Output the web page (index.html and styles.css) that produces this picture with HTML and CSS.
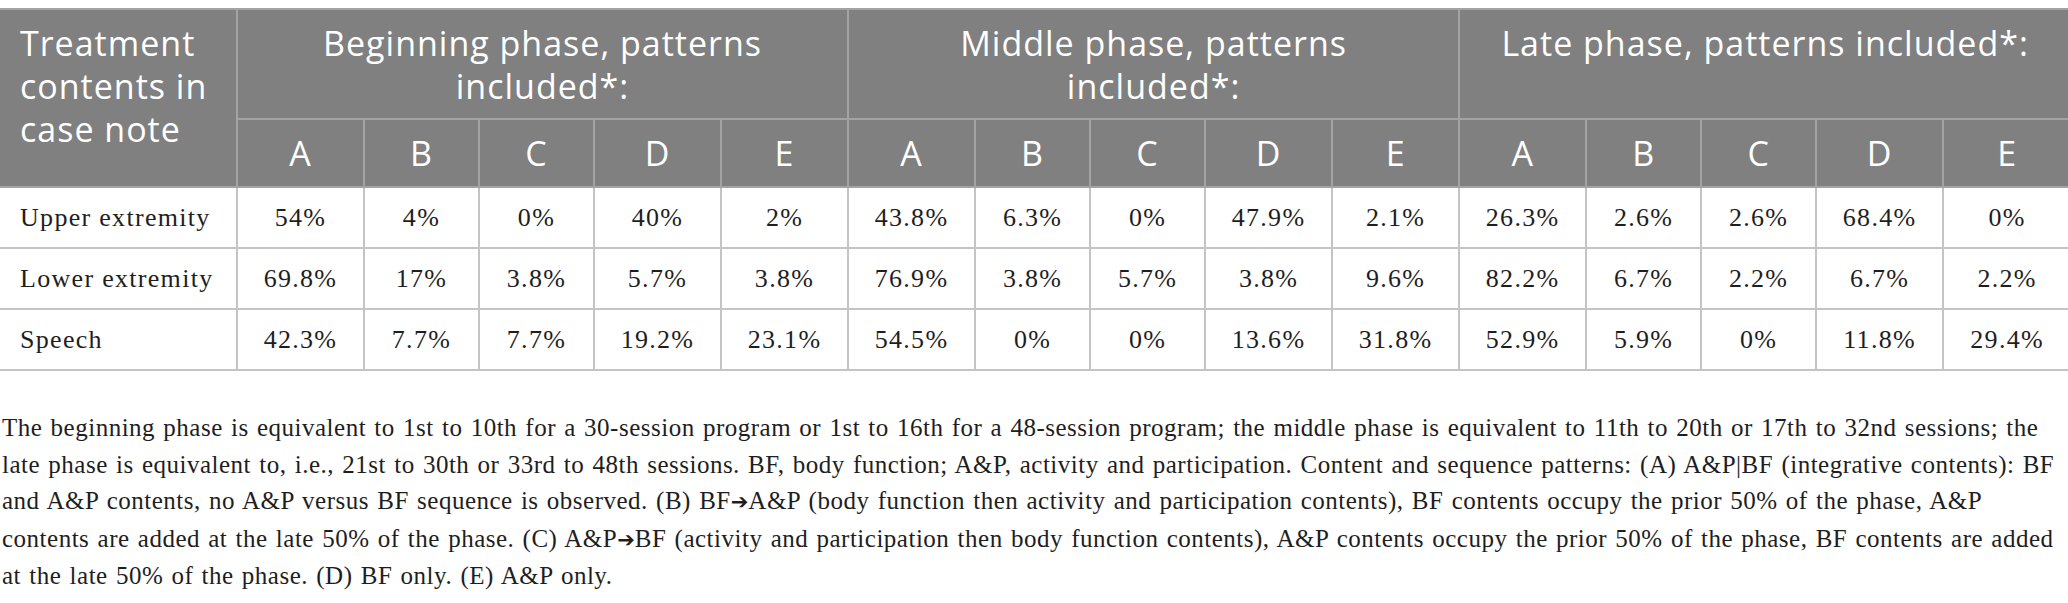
FILE: index.html
```html
<!DOCTYPE html>
<html lang="en">
<head>
<meta charset="utf-8">
<title>Treatment contents table</title>
<link rel="stylesheet" href="styles.css">
</head>
<body>
<table class="data">
  <colgroup>
    <col class="c-first">
    <col class="c-w"><col class="c-n"><col class="c-n"><col class="c-w"><col class="c-w">
    <col class="c-w"><col class="c-n"><col class="c-n"><col class="c-w"><col class="c-w">
    <col class="c-w"><col class="c-n"><col class="c-n"><col class="c-w"><col class="c-w">
  </colgroup>
  <thead>
    <tr class="h1">
      <th class="corner" rowspan="2">Treatment contents in case note</th>
      <th class="group" colspan="5">Beginning phase, patterns included*:</th>
      <th class="group" colspan="5">Middle phase, patterns included*:</th>
      <th class="group" colspan="5">Late phase, patterns included*:</th>
    </tr>
    <tr class="h2">
      <th>A</th><th>B</th><th>C</th><th>D</th><th>E</th>
      <th>A</th><th>B</th><th>C</th><th>D</th><th>E</th>
      <th>A</th><th>B</th><th>C</th><th>D</th><th>E</th>
    </tr>
  </thead>
  <tbody>
    <tr>
      <td class="label">Upper extremity</td>
      <td>54%</td><td>4%</td><td>0%</td><td>40%</td><td>2%</td>
      <td>43.8%</td><td>6.3%</td><td>0%</td><td>47.9%</td><td>2.1%</td>
      <td>26.3%</td><td>2.6%</td><td>2.6%</td><td>68.4%</td><td>0%</td>
    </tr>
    <tr>
      <td class="label">Lower extremity</td>
      <td>69.8%</td><td>17%</td><td>3.8%</td><td>5.7%</td><td>3.8%</td>
      <td>76.9%</td><td>3.8%</td><td>5.7%</td><td>3.8%</td><td>9.6%</td>
      <td>82.2%</td><td>6.7%</td><td>2.2%</td><td>6.7%</td><td>2.2%</td>
    </tr>
    <tr>
      <td class="label">Speech</td>
      <td>42.3%</td><td>7.7%</td><td>7.7%</td><td>19.2%</td><td>23.1%</td>
      <td>54.5%</td><td>0%</td><td>0%</td><td>13.6%</td><td>31.8%</td>
      <td>52.9%</td><td>5.9%</td><td>0%</td><td>11.8%</td><td>29.4%</td>
    </tr>
  </tbody>
</table>
<p class="note">The beginning phase is equivalent to 1st to 10th for a 30-session program or 1st to 16th for a 48-session program; the middle phase is equivalent to 11th to 20th or 17th to 32nd sessions; the late phase is equivalent to, i.e., 21st to 30th or 33rd to 48th sessions. BF, body function; A&amp;P, activity and participation. Content and sequence patterns: (A) A&amp;P|BF (integrative contents): BF and A&amp;P contents, no A&amp;P versus BF sequence is observed. (B) BF<span class="arrow">➔</span>A&amp;P (body function then activity and participation contents), BF contents occupy the prior 50% of the phase, A&amp;P contents are added at the late 50% of the phase. (C) A&amp;P<span class="arrow">➔</span>BF (activity and participation then body function contents), A&amp;P contents occupy the prior 50% of the phase, BF contents are added at the late 50% of the phase. (D) BF only. (E) A&amp;P only.</p>
</body>
</html>
```
FILE: styles.css
```css
html, body {
  background: #ffffff;
}
body {
  margin: 8px 0 0 0;
}
.data {
  width: 2068px;
  table-layout: fixed;
  border-collapse: collapse;
  border-top: 2px solid #bdbdbd;
}
.c-first { width: 237px; }
.c-w { width: 127px; }
.c-n { width: 115px; }

.data th {
  background: #808080;
  color: #ffffff;
  font-family: "Open Sans", "Lato", sans-serif;
  font-weight: 400;
  font-size: 34px;
  letter-spacing: 1px;
  line-height: 43px;
  border: 2px solid #a3a3a3;
  padding: 0;
}
.data th:first-child { border-left: none; }
.data tr th:last-child { border-right: none; }
.h1 th { height: 96px; vertical-align: top; padding-top: 12px; }
.h1 .corner { text-align: left; padding-left: 20px; padding-right: 4px; }
.h1 .group { text-align: center; padding-left: 24px; padding-right: 24px; }
.h2 th { height: 66px; vertical-align: middle; text-align: center; }

.data td {
  font-family: "Liberation Serif", "Times New Roman", serif;
  font-size: 26px;
  letter-spacing: 1.3px;
  color: #1e1e1e;
  text-align: center;
  vertical-align: middle;
  height: 59px;
  padding: 0;
  border: 2px solid #c4c4c4;
}
.data td:first-child { border-left: none; }
.data td:last-child { border-right: none; }
.data td.label { text-align: left; padding-left: 20px; }

.note {
  margin: 39px 0 0 0;
  padding: 0 0 0 2px;
  font-family: "Liberation Serif", "Times New Roman", serif;
  font-size: 25px;
  letter-spacing: 0.5px;
  word-spacing: 1.5px;
  line-height: 36.5px;
  color: #1e1e1e;
}
.arrow {
  font-family: "DejaVu Sans", sans-serif;
  font-size: 21px;
  letter-spacing: 0;
}
```
